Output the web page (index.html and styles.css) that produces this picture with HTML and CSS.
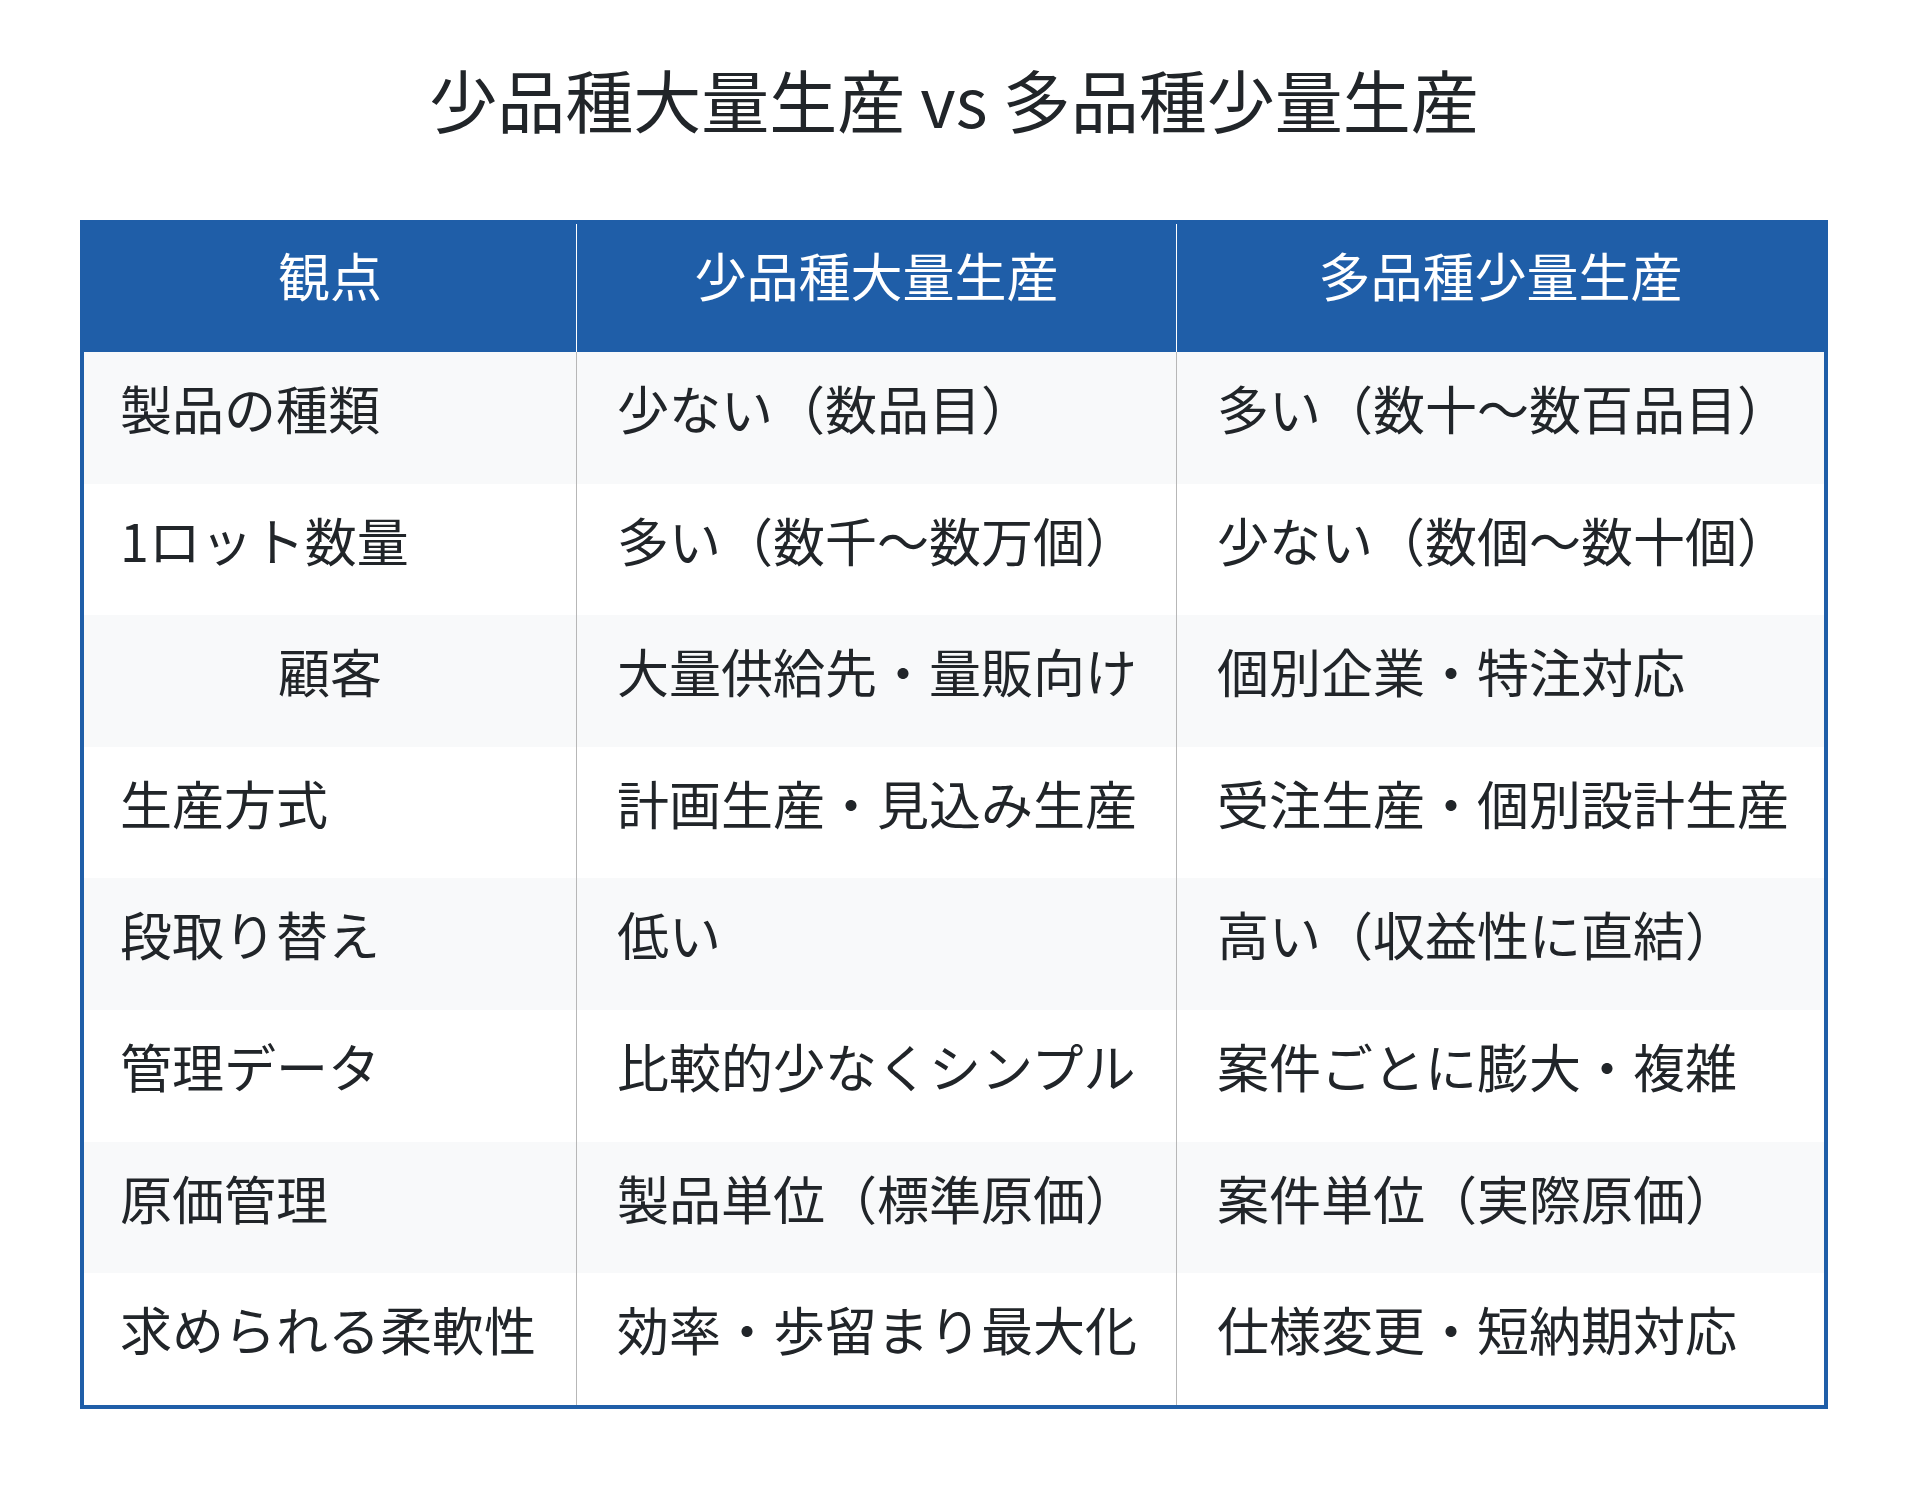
FILE: index.html
```html
<!DOCTYPE html>
<html lang="ja">
<head>
<meta charset="utf-8">
<title>少品種大量生産 vs 多品種少量生産</title>
<link rel="stylesheet" href="styles.css">
</head>
<body>
<main class="page">
  <h1 class="title">少品種大量生産 vs 多品種少量生産</h1>
  <table class="compare">
    <colgroup>
      <col class="c1">
      <col class="c2">
      <col class="c3">
    </colgroup>
    <thead>
      <tr>
        <th>観点</th>
        <th>少品種大量生産</th>
        <th>多品種少量生産</th>
      </tr>
    </thead>
    <tbody>
      <tr>
        <td>製品の種類</td>
        <td>少ない（数品目）</td>
        <td>多い（数十～数百品目）</td>
      </tr>
      <tr>
        <td>1ロット数量</td>
        <td>多い（数千～数万個）</td>
        <td>少ない（数個～数十個）</td>
      </tr>
      <tr>
        <td class="center">顧客</td>
        <td>大量供給先・量販向け</td>
        <td>個別企業・特注対応</td>
      </tr>
      <tr>
        <td>生産方式</td>
        <td>計画生産・見込み生産</td>
        <td>受注生産・個別設計生産</td>
      </tr>
      <tr>
        <td>段取り替え</td>
        <td>低い</td>
        <td>高い（収益性に直結）</td>
      </tr>
      <tr>
        <td>管理データ</td>
        <td>比較的少なくシンプル</td>
        <td>案件ごとに膨大・複雑</td>
      </tr>
      <tr>
        <td>原価管理</td>
        <td>製品単位（標準原価）</td>
        <td>案件単位（実際原価）</td>
      </tr>
      <tr>
        <td>求められる柔軟性</td>
        <td>効率・歩留まり最大化</td>
        <td>仕様変更・短納期対応</td>
      </tr>
    </tbody>
  </table>
</main>
</body>
</html>
```

FILE: styles.css
```css
html, body {
  margin: 0;
  padding: 0;
  background: #ffffff;
}

body {
  font-family: "Noto Sans CJK JP", "Noto Sans", sans-serif;
  color: #212529;
}

.page {
  padding: 50px 80px 0;
}

.title {
  margin: 0 0 73px;
  font-size: 68px;
  font-weight: 400;
  line-height: 97px;
  text-align: center;
  color: #212529;
}

.compare {
  width: 100%;
  table-layout: fixed;
  border-collapse: separate;
  border-spacing: 0;
  border: 4px solid #1f5ea8;
  box-shadow: 0 1px 0 #b9bec6;
  font-size: 52px;
}

.c1 { width: 493px; }
.c2 { width: 600px; }
.c3 { width: auto; }

.compare th {
  height: 128px;
  box-sizing: border-box;
  padding: 13px 20px 39px;
  line-height: 76px;
  background: #1f5ea8;
  color: #ffffff;
  font-weight: 400;
  text-align: center;
  border-right: 1px solid #ffffff;
}

.compare td {
  height: 131.6px;
  box-sizing: border-box;
  padding: 18px 20px 37.6px 40px;
  line-height: 76px;
  text-align: left;
  white-space: nowrap;
  border-right: 1px solid #b7b7b7;
}

.compare td:first-child {
  padding-left: 36px;
}

.compare th:last-child,
.compare td:last-child {
  border-right: none;
}

.compare tbody tr:nth-child(odd) td {
  background: #f8f9fa;
}

.compare tbody tr:nth-child(even) td {
  background: #ffffff;
}

.compare td.center {
  text-align: center;
  padding-left: 20px;
}
```
